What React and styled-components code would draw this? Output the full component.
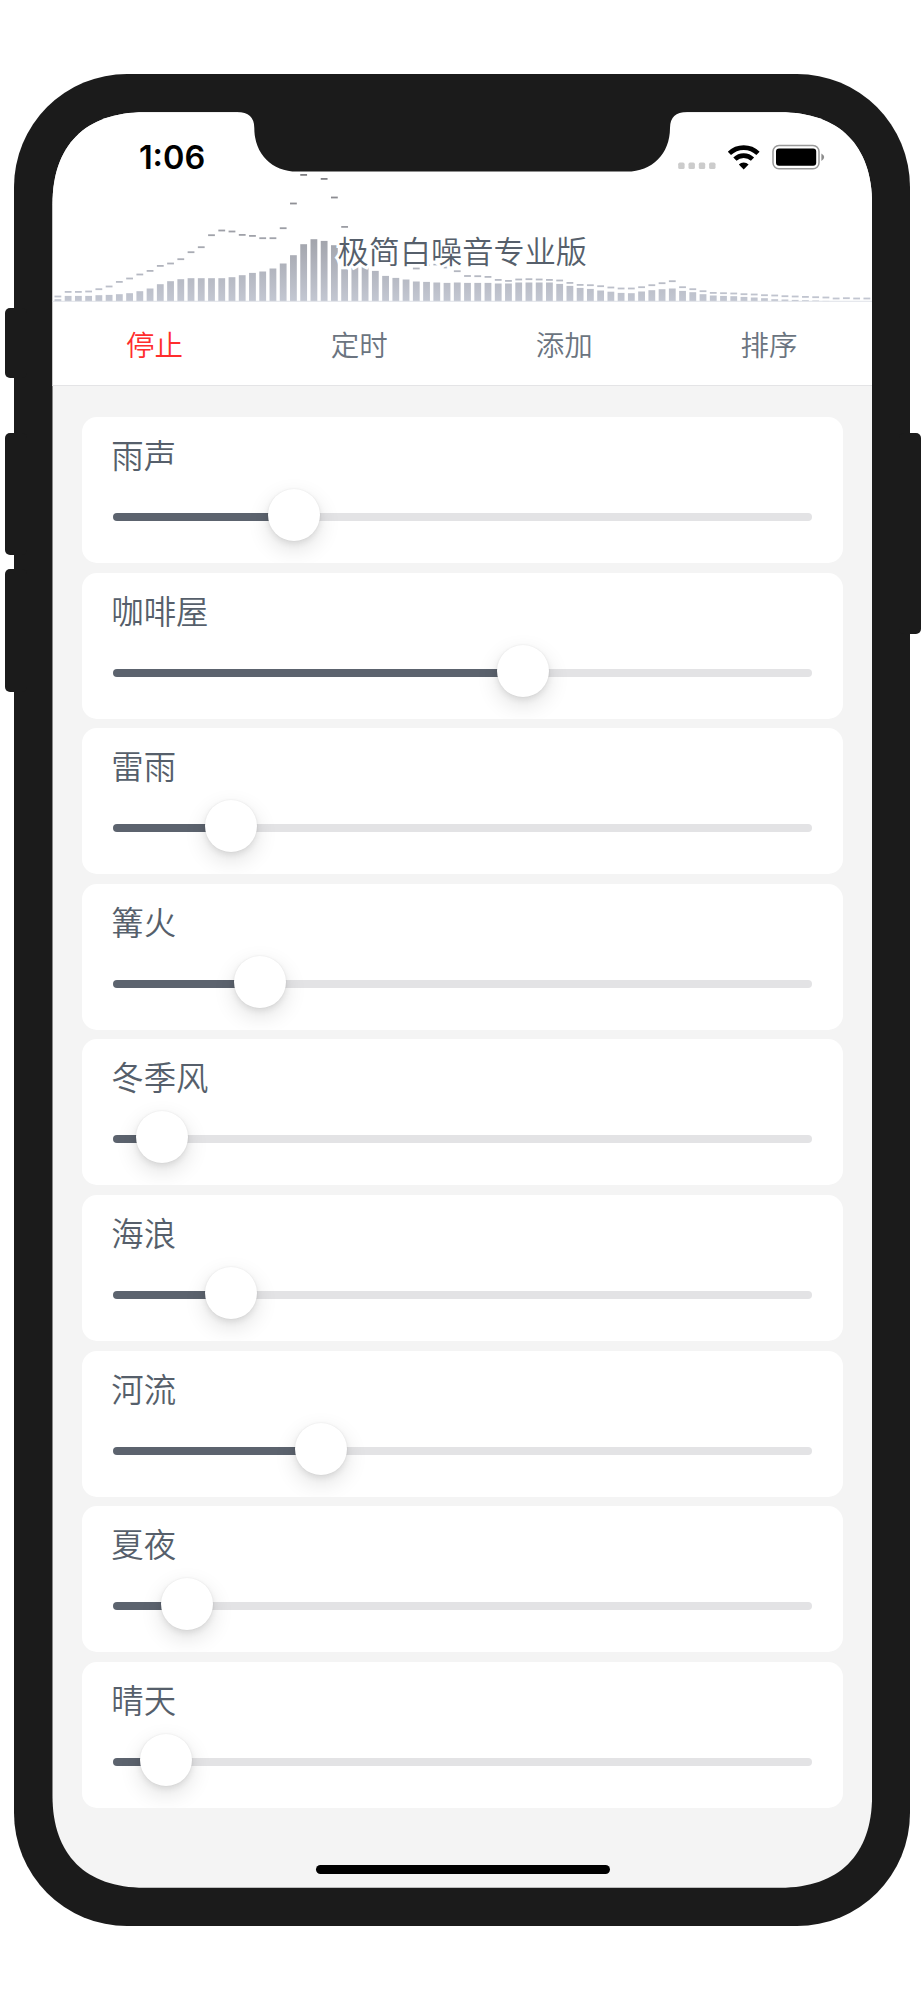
import React from "react";
import styled, { createGlobalStyle } from "styled-components";

// --- Styled Components ---

const GlobalStyle = createGlobalStyle`
  body {
    margin: 0;
    background: #ffffff;
    font-family: "Noto Sans CJK SC", sans-serif;
  }
`;

const Stage = styled.main`
  box-sizing: border-box;
  width: 924px;
  height: 2000px;
  padding: 74px 0 0 14.3px;
`;

const Device = styled.div`
  position: relative;
  box-sizing: border-box;
  width: 896.2px;
  height: 1852px;
  padding: 38.2px;
  border-radius: 113px;
  background: #1b1b1b;
`;

/* Physical keys, hanging over the edge of the body */
const SideKey = styled.span`
  position: absolute;
  top: ${(props) => props.$top}px;
  ${(props) => (props.$side === "left" ? "left: -9.6px" : "right: -11px")};
  width: 22px;
  height: ${(props) => props.$length}px;
  border-radius: 5px;
  background: #1b1b1b;
`;

const Screen = styled.div`
  display: flex;
  flex-direction: column;
  width: 819.6px;
  height: 1775.6px;
  background: #f4f4f4;
  clip-path: path(
    "M0 92 C0 33 33 0 92 0 H727.6 C786.6 0 819.6 33 819.6 92 V1683.6 C819.6 1742.6 786.6 1775.6 727.6 1775.6 H92 C33 1775.6 0 1742.6 0 1683.6 Z"
  );
`;

/* Drawn over the screen and a little into the frame */
const Notch = styled.svg`
  position: absolute;
  top: 34.2px;
  left: 222.9px;
  width: 450px;
  height: 66px;
`;

const Header = styled.header`
  display: flex;
  flex-direction: column;
  height: 273.3px;
  background: #ffffff;
  border-bottom: 1.5px solid #e4e4e6;
  box-sizing: content-box;
`;

const StatusBar = styled.div`
  display: flex;
  justify-content: space-between;
  box-sizing: border-box;
  height: 60px;
  padding: 24.4px 45.2px 0 86.4px;
`;

const Clock = styled.time`
  font-family: Inter, sans-serif;
  font-size: 32.5px;
  font-weight: 600;
  line-height: 42px;
  color: #000000;
`;

const StatusIcons = styled.svg`
  width: 150px;
  height: 30px;
  margin-top: 6px;
`;

const Visualizer = styled.div`
  position: relative;
  height: 130px;
`;

const Spectrum = styled.svg`
  display: block;
  width: 820px;
  height: 130px;
`;

const Title = styled.h1`
  position: absolute;
  left: 0;
  right: 0;
  top: 56px;
  margin: 0;
  font-size: 31.2px;
  font-weight: 350;
  line-height: 44px;
  text-align: center;
  color: #565f6b;
  -webkit-text-stroke: 6px #ffffff;
  paint-order: stroke fill;
`;

const Tabs = styled.nav`
  display: grid;
  grid-template-columns: repeat(4, 1fr);
  flex: 1;
`;

const Tab = styled.button`
  border: 0;
  padding: 0 1px 0 0;
  background: none;
  font-family: inherit;
  font-size: 28.5px;
  font-weight: 350;
  line-height: 40px;
  color: ${(props) => (props.$danger ? "#ff2d2d" : "#6b7480")};
`;

const SoundList = styled.div`
  display: flex;
  flex-direction: column;
  gap: 9.6px;
  padding: 30.5px 29.4px 0;
`;

const SoundCard = styled.section`
  box-sizing: border-box;
  height: 146px;
  padding: 13px 30.5px 0 31px;
  border-radius: 15px;
  background: #ffffff;
  overflow: hidden;
`;

const SoundName = styled.h2`
  margin: 0 0 0 -1.6px;
  font-size: 32.4px;
  font-weight: 350;
  line-height: 48px;
  color: #565f6b;
`;

const Slider = styled.div`
  display: flex;
  align-items: center;
  height: 52px;
  margin-top: 11px;
`;

const Filled = styled.span`
  height: 8px;
  margin-top: 4px;
  border-radius: 4px 0 0 4px;
  background: #5c636e;
`;

const Thumb = styled.span`
  flex: none;
  width: 52px;
  height: 52px;
  margin: 0 -1px;
  border-radius: 50%;
  background: #ffffff;
  box-shadow: 0 8px 22px rgba(0, 0, 0, 0.12), 0 3px 6px rgba(0, 0, 0, 0.08),
    0 0 2px rgba(0, 0, 0, 0.07);
  z-index: 1;
`;

const Remaining = styled.span`
  flex: 1;
  height: 8px;
  margin-top: 4px;
  border-radius: 0 4px 4px 0;
  background: #e3e3e5;
`;

const HomeIndicator = styled.span`
  width: 294px;
  height: 9.5px;
  margin: auto auto 13.7px 263.2px;
  border-radius: 5px;
  background: #000000;
`;

// --- Data ---

const tabs = ["停止", "定时", "添加", "排序"];

// level = distance from the start of the track to the thumb, in px
const sounds = [
  { name: "雨声", level: 156 },
  { name: "咖啡屋", level: 385 },
  { name: "雷雨", level: 92.8 },
  { name: "篝火", level: 121.8 },
  { name: "冬季风", level: 23.8 },
  { name: "海浪", level: 92.8 },
  { name: "河流", level: 183 },
  { name: "夏夜", level: 48.8 },
  { name: "晴天", level: 27.8 },
];

const bars = [
  2, 5.3, 5.3, 5.3, 6, 6.3, 7, 8, 10, 12.7, 17, 20, 22, 23, 23, 23, 23, 24, 26,
  28.3, 29.7, 32.7, 37.7, 46, 57, 62, 60.3, 56, 48, 42, 36, 30.3, 25.3, 23.3,
  21.7, 19.7, 19.3, 18.7, 18.3, 18.7, 18.3, 18.3, 18.3, 17.7, 17.7, 18.7, 18.7,
  18.7, 18.7, 17.3, 15.3, 13.3, 12.3, 10.7, 9.5, 8.3, 8, 9.7, 11, 12, 12.7,
  10.3, 9, 7, 5.7, 5.3, 5, 4.3, 3.7, 3, 2, 1.7, 1.3, 1, 0.7, 0.3, 0, 0, 0, 0,
];

const peaks = [
  4.7, 9.3, 9.3, 9.7, 12, 14.7, 19.3, 22.7, 26.7, 30.3, 35.3, 37.7, 42, 49, 54,
  66, 70.7, 69.7, 66.3, 65.3, 63, 63, 73, 97.7, 126.3, 140, 122.3, 103.7, 74.3,
  60, 52, 46, 43, 40.3, 36, 32.7, 36, 36.7, 33.7, 30, 25.2, 25, 24.3, 21.3,
  20.3, 21.7, 22, 21.7, 21.3, 20.7, 18.3, 16.3, 16, 15, 13.7, 12.7, 12.7, 14,
  16, 18, 20, 14, 12, 10, 8.3, 8, 7.7, 7, 6.7, 6, 5.7, 5, 4.7, 4.3, 4, 3.7,
  2.7, 3, 2.7, 2.7,
];

const BASELINE = 129.2;
const STEP = 10.24;

// --- Parts ---

function SpectrumChart() {
  return (
    <Spectrum viewBox="0 0 820 130">
      <defs>
        <linearGradient
          id="level"
          gradientUnits="userSpaceOnUse"
          x1="0"
          y1="0"
          x2="0"
          y2={BASELINE}
        >
          <stop offset="0" stopColor="#7e7e82" />
          <stop offset="1" stopColor="#c3c7d2" />
        </linearGradient>
      </defs>
      <g fill="url(#level)">
        {bars.map((h, i) => (
          <rect key={i} x={2.5 + i * STEP} y={BASELINE - h} width="6.8" height={h} />
        ))}
        {peaks.map((p, i) => (
          <rect key={i} x={2.5 + i * STEP} y={BASELINE - p - 0.9} width="6.8" height="1.8" />
        ))}
      </g>
      <rect y="128.8" width="820" height="0.9" fill="#dcdfe6" />
    </Spectrum>
  );
}

function Status() {
  return (
    <StatusBar>
      <Clock>1:06</Clock>
      <StatusIcons viewBox="0 0 150 30">
        {/* no signal */}
        {[0, 1, 2, 3].map((i) => (
          <rect key={i} x={1.2 + i * 10.3} y="19.6" width="6.4" height="6.4" rx="1.6" fill="#cccccc" />
        ))}
        {/* wifi */}
        <g fill="none" stroke="#000000" strokeWidth="4.6">
          <path d="M52.4 10.4 A20.5 20.5 0 0 1 81 10.4" />
          <path d="M57.9 16.2 A12.6 12.6 0 0 1 75.5 16.2" />
        </g>
        <path d="M66.7 26.4 L61.8 21.5 A7 7 0 0 1 71.6 21.5 Z" fill="#000000" />
        {/* battery */}
        <rect x="96" y="2.5" width="46" height="23.2" rx="6" fill="none" stroke="#999999" strokeWidth="1.5" />
        <rect x="99" y="5.5" width="40.2" height="17.2" rx="3" fill="#000000" />
        <path d="M144.4 10.5 Q147.2 12 147.2 14.1 Q147.2 16.5 144.4 17.9 Z" fill="#8c8c8c" />
      </StatusIcons>
    </StatusBar>
  );
}

// --- App ---

export default function App() {
  return (
    <Stage>
      <GlobalStyle />
      <Device>
        <SideKey $side="left" $top={233.7} $length={70.6} />
        <SideKey $side="left" $top={358.5} $length={122} />
        <SideKey $side="left" $top={495} $length={122.5} />
        <SideKey $side="right" $top={358.5} $length={201} />
        <Screen>
          <Header>
            <Status />
            <Visualizer>
              <SpectrumChart />
              <Title>极简白噪音专业版</Title>
            </Visualizer>
            <Tabs>
              {tabs.map((label, i) => (
                <Tab key={label} $danger={i === 0}>
                  {label}
                </Tab>
              ))}
            </Tabs>
          </Header>
          <SoundList>
            {sounds.map((sound) => (
              <SoundCard key={sound.name}>
                <SoundName>{sound.name}</SoundName>
                <Slider>
                  <Filled style={{ width: sound.level }} />
                  <Thumb />
                  <Remaining />
                </Slider>
              </SoundCard>
            ))}
          </SoundList>
          <HomeIndicator />
        </Screen>
        <Notch viewBox="0 0 450 66">
          <path
            d="M0 0 H450 V4 Q433 4 433 20 C433 46 415 63.6 390 63.6 H60 C35 63.6 17.3 46 17.3 20 Q17.3 4 0 4 Z"
            fill="#1b1b1b"
          />
        </Notch>
      </Device>
    </Stage>
  );
}
